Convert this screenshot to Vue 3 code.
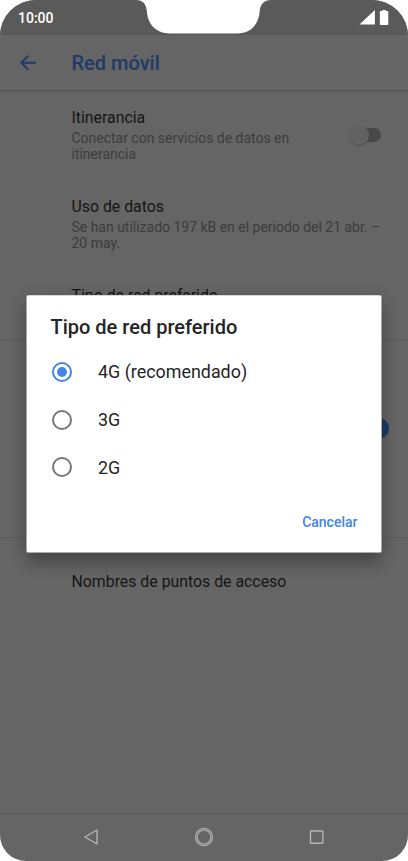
<script setup>
import { ref } from 'vue'

const options = ['4G (recomendado)', '3G', '2G']
const selected = ref(options[0])
</script>

<template>
  <main class="phone">
    <header class="status">
      <span class="time">10:00</span>
      <svg class="notch" width="136" height="34" viewBox="0 0 136 34">
        <path d="M0 0C7 0 10.500 4 11 12C12 24 20 33.500 34 33.500H102C116 33.500 123.500 24 124.500 12C125 4 129 0 136 0Z" fill="#fff" />
      </svg>
      <svg class="signals" width="32" height="18" viewBox="0 0 32 18">
        <path d="M0.500 15.500L16 1V15.500Z" fill="#fff" />
        <path d="M21 2.700Q21 2 21.700 2H23.500V1H27V2H28.800Q29.500 2 29.500 2.700V15.300Q29.500 16 28.800 16H21.700Q21 16 21 15.300Z" fill="#fff" />
      </svg>
    </header>

    <div class="toolbar">
      <svg class="back" width="18" height="18" viewBox="0 0 18 18" fill="none" stroke="#1e3a68" stroke-width="1.9">
        <path d="M16.700 8.700H2.500M9.300 1.700L2.300 8.700L9.300 15.700" />
      </svg>
      <h1>Red móvil</h1>
    </div>

    <div class="content">
      <section class="group first">
        <div class="row roaming">
          <div class="copy">
            <div class="name">Itinerancia</div>
            <div class="detail">Conectar con servicios de datos en<br>itinerancia</div>
          </div>
          <div class="switch"><i></i></div>
        </div>
        <div class="row usage">
          <div class="copy">
            <div class="name">Uso de datos</div>
            <div class="detail">Se han utilizado 197 kB en el periodo del 21 abr. –<br>20 may.</div>
          </div>
        </div>
        <div class="row"><div class="name">Tipo de red preferido</div></div>
      </section>
      <section class="group second">
        <div class="switch on"><i></i></div>
      </section>
      <section class="group third">
        <div class="name apn">Nombres de puntos de acceso</div>
      </section>
    </div>

    <nav class="nav">
      <svg width="24" height="24" viewBox="0 0 24 24" fill="none" stroke="#b4b4b4" stroke-width="1.4" stroke-linejoin="round"><path d="M18 5V19L5.800 12Z" /></svg>
      <svg width="24" height="24" viewBox="0 0 24 24" fill="none"><circle cx="12" cy="12" r="7.700" stroke="#a8a8a8" stroke-width="3" /><circle cx="12" cy="12" r="7.600" stroke="#777" stroke-width=".6" /></svg>
      <svg width="24" height="24" viewBox="0 0 24 24" fill="none" stroke="#b4b4b4" stroke-width="1.400"><rect x="5.500" y="6" width="12.300" height="12.300" rx=".4" /></svg>
    </nav>

    <div class="dialog">
      <h2>Tipo de red preferido</h2>
      <div class="options">
        <div v-for="option in options" :key="option" class="option" @click="selected = option">
          <span class="radio" :class="{ checked: option === selected }"></span>
          <span class="label">{{ option }}</span>
        </div>
      </div>
      <div class="actions"><span class="cancel">Cancelar</span></div>
    </div>
  </main>
</template>

<style>
body {
  margin: 0;
  background: #fff;
}
</style>

<style scoped>
.phone {
  position: relative;
  box-sizing: border-box;
  width: 408px;
  height: 861px;
  display: flex;
  flex-direction: column;
  overflow: hidden;
  border-radius: 36px 36px 26px 26px;
  background: #656565;
  font-family: Roboto, sans-serif;
}
.status {
  flex: none;
  height: 35px;
  display: flex;
  justify-content: space-between;
  background: #5a5a5a;
}
.time {
  width: 119px;
  padding-left: 18px;
  font-size: 14px;
  font-weight: 500;
  line-height: 36px;
  color: #fff;
}
.signals {
  margin: 9px 17px 0 88px;
}
.toolbar {
  flex: none;
  box-sizing: border-box;
  height: 55px;
  display: flex;
  align-items: center;
  padding-left: 19px;
  box-shadow: 0 1px 2px #4c4c4c;
}
.toolbar h1 {
  margin: 1px 0 0 34.5px;
  font-size: 20px;
  line-height: 24px;
  font-weight: 500;
  color: #1e3a68;
}
.content {
  flex: 1;
  display: flex;
  flex-direction: column;
}
.group {
  box-sizing: border-box;
  border-bottom: 1px solid #5a5a5a;
}
.first {
  height: 251px;
  padding: 18px 0 0 71.5px;
}
.second {
  height: 197px;
  display: flex;
  justify-content: flex-end;
  padding: 76px 19px 0 0;
}
.third {
  border: 0;
  padding: 34px 0 0 71.5px;
}
.row {
  display: flex;
  justify-content: space-between;
}
.roaming, .usage {
  height: 89px;
}
.name {
  font-size: 15.850px;
  line-height: 20px;
  color: #151515;
}
.detail {
  margin-top: 2px;
  font-size: 13.970px;
  line-height: 16px;
  color: #3c3c3c;
}
.switch {
  position: relative;
  width: 32px;
  height: 22px;
  margin: 15.500px 27.500px 0 0;
}
.switch::before {
  content: '';
  position: absolute;
  inset: 4px 0 4px 3px;
  border-radius: 7px;
  background: #484848;
}
.switch i {
  position: absolute;
  left: 0;
  top: 1px;
  width: 20px;
  height: 20px;
  border-radius: 50%;
  background: #626262;
  box-shadow: 0 1px 1px #4d4d4d;
}
.switch.on {
  margin: 0;
}
.switch.on i {
  left: auto;
  right: 0;
  background: #1e3a68;
}
.nav {
  flex: none;
  box-sizing: border-box;
  height: 48px;
  display: flex;
  align-items: center;
  justify-content: space-between;
  padding: 0 79px 2px;
  border-top: 2px solid #5d5d5d;
}
.dialog {
  position: absolute;
  left: 27px;
  top: 296px;
  box-sizing: border-box;
  width: 354px;
  height: 256px;
  padding: 19px 23.500px 20px;
  display: flex;
  flex-direction: column;
  border-radius: 1.500px;
  background: #fff;
  color: #242526;
  box-shadow: 0 -1px 0 #d8d8d8, 0 0 0 1px #aaa, 0 11px 16px rgba(0, 0, 0, .23), 0 3px 20px rgba(0, 0, 0, .14);
}
.dialog h2 {
  margin: 0;
  font-size: 20px;
  line-height: 25px;
  font-weight: 500;
}
.options {
  margin-top: 8px;
}
.option {
  height: 47.700px;
  display: flex;
  align-items: center;
}
.radio {
  box-sizing: border-box;
  width: 20px;
  height: 20px;
  margin-left: 1.800px;
  border: 2px solid #777;
  border-radius: 50%;
}
.radio.checked {
  display: grid;
  place-items: center;
  border-color: #4285e4;
}
.radio.checked::after {
  content: '';
  width: 10px;
  height: 10px;
  border-radius: 50%;
  background: #4285e4;
}
.label {
  margin-left: 25.700px;
  font-size: 17.900px;
}
.actions {
  margin-top: auto;
  text-align: right;
}
.cancel {
  font-size: 14px;
  line-height: 20px;
  font-weight: 500;
  color: #4285e4;
}
</style>
